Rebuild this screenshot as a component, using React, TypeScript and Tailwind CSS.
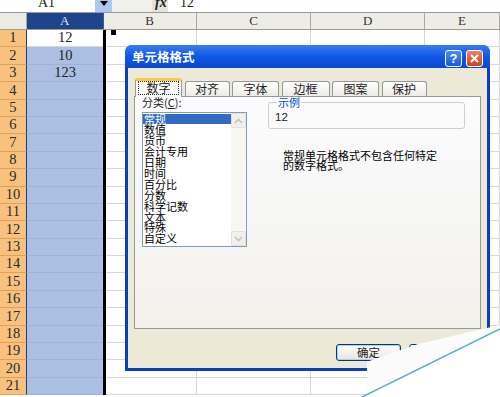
import React from "react";

const cats = ["常规", "数值", "货币", "会计专用", "日期", "时间", "百分比", "分数", "科学记数", "文本", "特殊", "自定义"];
const tabs = ["数字", "对齐", "字体", "边框", "图案", "保护"];
const tabW = [47, 45, 47, 48, 47, 45];
const values: Record<number, string> = { 1: "12", 2: "10", 3: "123" };

function Chevron({ up }: { up?: boolean }) {
  return (
    <svg width="9" height="6" viewBox="0 0 9 6">
      <path d={up ? "M1 5 L4.5 1.5 L8 5" : "M1 1 L4.5 4.5 L8 1"} fill="none" stroke="#C4C3BC" strokeWidth="1.6" />
    </svg>
  );
}

export default function App() {
  const rows = Array.from({ length: 21 }, (_, i) => i + 1);
  return (
    <div className="relative h-[397px] w-[500px] overflow-hidden bg-white font-['Liberation_Serif',serif] text-[#222]">
      {/* formula bar */}
      <div className="flex h-[13px] overflow-hidden border-b border-[#9a9a9a]">
        <div className="w-[95px] bg-white pl-[38px]">
          <div className="-mt-[4px] text-[14px] leading-[14px]">A1</div>
        </div>
        <div className="flex w-[17px] justify-center bg-[#AFC6EE]">
          <div className="mt-[1px] h-0 w-0 border-x-[4px] border-t-[5px] border-x-transparent border-t-black" />
        </div>
        <div className="w-[40px] bg-[#F1F1EC]" />
        <div className="w-[16px] bg-[#E4E4DC] pl-[3px]">
          <div className="-mt-[4px] text-[14px] font-bold italic leading-[14px]">fx</div>
        </div>
        <div className="flex-1 bg-white pl-[12px]">
          <div className="-mt-[4px] text-[14px] leading-[14px]">12</div>
        </div>
      </div>

      {/* column header */}
      <div className="flex h-[17px] border-b border-[#9c9b91] text-[13px] leading-[16px] text-[#333]">
        <div className="w-[29px] border-r border-[#a9a89e] bg-[#ECEBE3]" />
        <div className="w-[83px] border-r border-[#3a5aa0] bg-[#1F438D] text-center text-[#DCE6F7]">A</div>
        <div className="w-[101px] border-r border-[#a9a89e] bg-[#EEEDE5] text-center">B</div>
        <div className="w-[124px] border-r border-[#a9a89e] bg-[#EEEDE5] text-center">C</div>
        <div className="w-[123px] border-r border-[#a9a89e] bg-[#EEEDE5] text-center">D</div>
        <div className="w-[75px] shrink-0 border-r border-[#a9a89e] bg-[#EEEDE5] text-center">E</div>
      </div>

      {/* rows */}
      {rows.map((r) => (
        <div key={r} className="flex h-[17.4px] text-[14.5px]">
          <div className="flex w-[29px] items-center justify-center border-b border-r border-b-[#DDA25C] border-r-[#27386a] bg-[#F8C27E] text-[#2a2a2a]">
            {r}
          </div>
          <div
            className={
              r === 1
                ? "flex w-[83px] items-center justify-center border-b border-[#D8D8D8] bg-white"
                : "flex w-[83px] items-center justify-center border-b border-[#9DB2D8] bg-[#AABFE2]"
            }
          >
            {values[r]}
          </div>
          <div className="w-[3px] bg-black" />
          <div className="w-[98px] border-b border-r border-[#D6D6D6]" />
          <div className="w-[124px] border-b border-r border-[#D6D6D6]" />
          <div className="w-[123px] border-b border-r border-[#D6D6D6]" />
          <div className="w-[75px] shrink-0 border-b border-r border-[#D6D6D6]" />
        </div>
      ))}

      {/* selection handle square */}
      <div className="absolute left-[111px] top-[30px] h-[5px] w-[5px] bg-black" />

      {/* dialog */}
      <div className="absolute left-[125px] top-[45px] flex h-[326px] w-[365px] flex-col rounded-t-[7px] bg-[#0B3FC0] font-['Noto_Sans_CJK_SC','Noto_Sans',sans-serif]">
        <div className="flex h-[23px] items-start rounded-t-[7px] bg-linear-to-b from-[#3A7CF2] via-[#0F58E4] to-[#0A48D0] pl-[7px] pr-[7px]">
          <div className="mt-[4px] text-[12.5px] font-bold leading-[15px] text-white">单元格格式</div>
          <div className="ml-auto mt-[5px] flex gap-[4px]">
            <div className="flex h-[17px] w-[17px] items-center justify-center rounded-[3px] border border-white bg-linear-to-b from-[#4A8CF8] to-[#1C58D9] font-['Liberation_Sans',sans-serif] text-[13px] font-bold leading-[15px] text-white">
              ?
            </div>
            <div className="flex h-[17px] w-[17px] items-center justify-center rounded-[3px] border border-white bg-linear-to-b from-[#EE8260] to-[#C9411F]">
              <svg width="9" height="9" viewBox="0 0 9 9">
                <path d="M1 1 L8 8 M8 1 L1 8" stroke="white" strokeWidth="2" />
              </svg>
            </div>
          </div>
        </div>

        <div className="mx-[3px] flex h-[300px] flex-col bg-[#ECE9D8] pt-[10px]">
          {/* tabs */}
          <div className="flex h-[18px] items-end gap-[2.5px] pl-[7px]">
            {tabs.map((t, i) =>
              i === 0 ? (
                <div
                  key={t}
                  style={{ width: tabW[i] }}
                  className="relative z-10 -mb-px flex h-[19px] justify-center rounded-t-[3px] border-x border-t-[3px] border-x-[#919B9C] border-t-[#FFC83C] bg-[#FCFCFE] pt-[0px]"
                >
                  <div className="h-[14px] w-[41px] border border-dotted border-[#333] text-center text-[12px] leading-[12px]">{t}</div>
                </div>
              ) : (
                <div
                  key={t}
                  style={{ width: tabW[i] }}
                  className="h-[15px] rounded-t-[3px] border border-b-0 border-[#919B9C] bg-linear-to-b from-white to-[#ECEBE6] text-center text-[12px] leading-[14px]"
                >
                  {t}
                </div>
              )
            )}
          </div>

          {/* panel */}
          <div className="mx-[6px] flex h-[233px] border border-[#919B9C] bg-linear-to-b from-[#FCFCFE] to-[#F2F1EC]">
            <div className="flex flex-col pl-[7px]">
              <div className="text-[11px] leading-[11px]">
                分类(<span className="underline">C</span>):
              </div>
              <div className="mt-[4px] flex h-[135px] w-[105px] border border-[#7F9DB9] bg-white">
                <div className="w-[88px] pt-[0.5px]">
                  {cats.map((c, i) => (
                    <div
                      key={c}
                      className={
                        i === 0
                          ? "h-[10.9px] bg-[#316AC5] px-[1px] text-[11px] leading-[10.9px] text-white"
                          : "h-[10.9px] px-[1px] text-[11px] leading-[10.9px] text-black"
                      }
                    >
                      {c}
                    </div>
                  ))}
                </div>
                <div className="flex w-[15px] flex-col justify-between bg-[#F7F6F1]">
                  <div className="flex h-[15px] items-center justify-center rounded-[2px] border border-[#E3E1D7] bg-[#F1F0EA]">
                    <Chevron up />
                  </div>
                  <div className="flex h-[15px] items-center justify-center rounded-[2px] border border-[#E3E1D7] bg-[#F1F0EA]">
                    <Chevron />
                  </div>
                </div>
              </div>
            </div>

            <div className="ml-[21px] flex flex-col">
              <fieldset className="w-[197px] rounded-[3px] border border-[#D0D0BF] pb-[5px] pl-[6px]">
                <legend className="ml-[2px] px-[1px] text-[11px] leading-[11px] text-[#0046D5]">示例</legend>
                <div className="mt-[4px] font-['Liberation_Sans',sans-serif] text-[11.5px] leading-[11px]">12</div>
              </fieldset>
              <div className="ml-[15px] mt-[21px] text-[11px] leading-[10px] text-black">
                常规单元格格式不包含任何特定
                <br />
                的数字格式。
              </div>
            </div>
          </div>

          {/* buttons */}
          <div className="mt-[15px] flex justify-end gap-[8px] pr-[13px]">
            <div className="h-[17px] w-[65px] rounded-[3px] border border-[#003C74] bg-linear-to-b from-white to-[#E6E5DE] text-center text-[11.5px] leading-[15px] shadow-[inset_0_0_0_1px_#B5CDF5]">
              确定
            </div>
            <div className="h-[17px] w-[65px] rounded-[3px] border border-[#003C74] bg-linear-to-b from-white to-[#E6E5DE] text-center text-[11.5px] leading-[15px]">
              取消
            </div>
          </div>
        </div>
      </div>

      {/* page curl */}
      <svg className="absolute left-0 top-0" width="500" height="397">
        <defs>
          <linearGradient id="flap" x1="0" y1="0" x2="0.6" y2="1">
            <stop offset="0" stopColor="#FFFFFF" />
            <stop offset="0.7" stopColor="#FAFAFA" />
            <stop offset="1" stopColor="#EDEDED" />
          </linearGradient>
        </defs>
        <polygon points="361,397 500,329 500,397" fill="#FFFFFF" />
        <polygon points="361,397 367,394 367,397" fill="#FFFFFF" />
        <polygon points="367,362 372,360 418,344 500,325 500,329 367,394" fill="url(#flap)" />
        <line x1="500" y1="329" x2="360" y2="398" stroke="#55B0BE" strokeWidth="1.5" />
      </svg>
    </div>
  );
}
